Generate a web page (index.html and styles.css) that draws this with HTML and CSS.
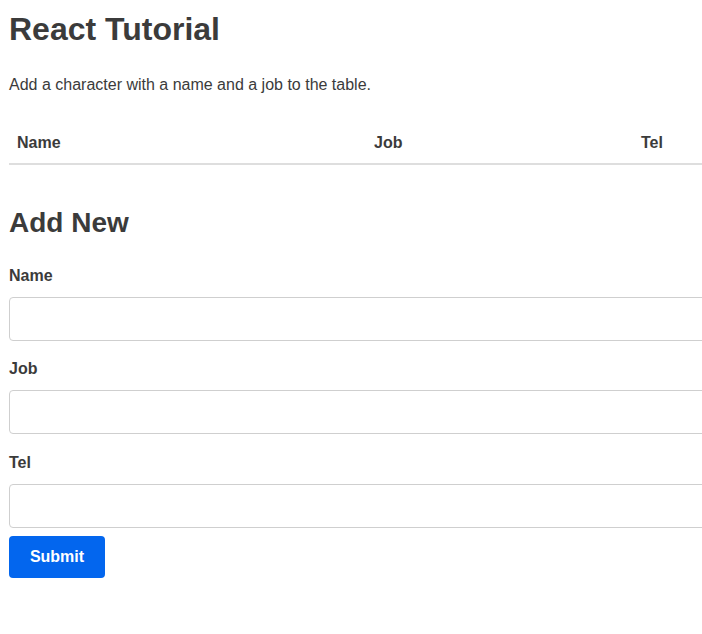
FILE: index.html
```html
<!DOCTYPE html>
<html lang="en">
<head>
<meta charset="utf-8">
<title>React Tutorial</title>
<link rel="stylesheet" href="styles.css">
</head>
<body>
<div class="container">
  <h1 class="title">React Tutorial</h1>
  <p class="intro">Add a character with a name and a job to the table.</p>
  <table class="people">
    <thead>
      <tr>
        <th class="col-name">Name</th>
        <th class="col-job">Job</th>
        <th class="col-tel">Tel</th>
      </tr>
    </thead>
    <tbody></tbody>
  </table>
  <h2 class="subtitle">Add New</h2>
  <form class="form">
    <label class="label" for="name">Name</label>
    <input class="field" type="text" id="name" name="name">
    <label class="label" for="job">Job</label>
    <input class="field" type="text" id="job" name="job">
    <label class="label" for="tel">Tel</label>
    <input class="field" type="text" id="tel" name="tel">
    <button class="submit" type="button">Submit</button>
  </form>
</div>
</body>
</html>
```
FILE: styles.css
```css
html {
  overflow: hidden;
}
body {
  margin: 0;
  background: #fff;
  color: #3b3b3b;
  font-family: "Liberation Sans", Arial, sans-serif;
  font-size: 16px;
  line-height: 24px;
}
.container {
  width: 820px;
  padding: 10px 0 0 9px;
}
.title {
  margin: 0;
  font-size: 32px;
  line-height: 38px;
  font-weight: 700;
}
.intro {
  margin: 25px 0 0;
}
.people {
  margin-top: 25px;
  width: 100%;
  border-collapse: collapse;
  border-spacing: 0;
}
.people th {
  text-align: left;
  font-weight: 700;
  padding: 9px 8px 8px;
  border-bottom: 2px solid #dedede;
}
.col-name { width: 341px; }
.col-job { width: 251px; }
.subtitle {
  margin: 41px 0 0;
  font-size: 28px;
  line-height: 34px;
  font-weight: 700;
}
.form {
  display: flex;
  flex-direction: column;
  align-items: flex-start;
  margin-top: 24px;
}
.label {
  display: block;
  font-weight: 700;
  margin-bottom: 9px;
}
.field {
  box-sizing: border-box;
  width: 100%;
  height: 44px;
  margin: 0 0 16px;
  padding: 0 12px;
  border: 1px solid #cfcfcf;
  border-radius: 4px;
  font: inherit;
  background: #fff;
}
.field:nth-of-type(2) {
  margin-bottom: 17px;
}
.field:last-of-type {
  margin-bottom: 8px;
}
.submit {
  box-sizing: border-box;
  width: 96px;
  height: 42px;
  border: 0;
  border-radius: 4px;
  background: #0366ee;
  color: #fff;
  font-family: inherit;
  font-size: 16px;
  font-weight: 700;
  cursor: pointer;
}
```
